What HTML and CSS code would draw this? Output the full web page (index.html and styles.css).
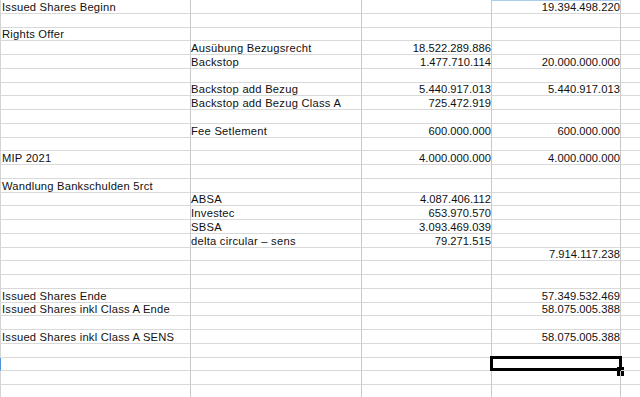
FILE: index.html
```html
<!DOCTYPE html>
<html lang="de">
<head>
<meta charset="utf-8">
<title>Issued Shares</title>
<link rel="stylesheet" href="styles.css">
</head>
<body>
<div class="sheet">
  <div class="row"><div class="c a">Issued Shares Beginn</div><div class="c b"></div><div class="c n"></div><div class="c n hl">19.394.498.220</div><div class="c e"></div></div>
  <div class="row"><div class="c a"></div><div class="c b"></div><div class="c n"></div><div class="c n"></div><div class="c e"></div></div>
  <div class="row"><div class="c a">Rights Offer</div><div class="c b"></div><div class="c n"></div><div class="c n"></div><div class="c e"></div></div>
  <div class="row"><div class="c a"></div><div class="c b">Ausübung Bezugsrecht</div><div class="c n">18.522.289.886</div><div class="c n"></div><div class="c e"></div></div>
  <div class="row"><div class="c a"></div><div class="c b">Backstop</div><div class="c n">1.477.710.114</div><div class="c n">20.000.000.000</div><div class="c e"></div></div>
  <div class="row"><div class="c a"></div><div class="c b"></div><div class="c n"></div><div class="c n"></div><div class="c e"></div></div>
  <div class="row"><div class="c a"></div><div class="c b">Backstop add Bezug</div><div class="c n">5.440.917.013</div><div class="c n">5.440.917.013</div><div class="c e"></div></div>
  <div class="row"><div class="c a"></div><div class="c b">Backstop add Bezug Class A</div><div class="c n">725.472.919</div><div class="c n"></div><div class="c e"></div></div>
  <div class="row"><div class="c a"></div><div class="c b"></div><div class="c n"></div><div class="c n"></div><div class="c e"></div></div>
  <div class="row"><div class="c a"></div><div class="c b">Fee Setlement</div><div class="c n">600.000.000</div><div class="c n">600.000.000</div><div class="c e"></div></div>
  <div class="row"><div class="c a"></div><div class="c b"></div><div class="c n"></div><div class="c n"></div><div class="c e"></div></div>
  <div class="row"><div class="c a">MIP 2021</div><div class="c b"></div><div class="c n">4.000.000.000</div><div class="c n">4.000.000.000</div><div class="c e"></div></div>
  <div class="row"><div class="c a"></div><div class="c b"></div><div class="c n"></div><div class="c n"></div><div class="c e"></div></div>
  <div class="row"><div class="c a">Wandlung Bankschulden 5rct</div><div class="c b"></div><div class="c n"></div><div class="c n"></div><div class="c e"></div></div>
  <div class="row"><div class="c a"></div><div class="c b">ABSA</div><div class="c n">4.087.406.112</div><div class="c n"></div><div class="c e"></div></div>
  <div class="row"><div class="c a"></div><div class="c b">Investec</div><div class="c n">653.970.570</div><div class="c n"></div><div class="c e"></div></div>
  <div class="row"><div class="c a"></div><div class="c b">SBSA</div><div class="c n">3.093.469.039</div><div class="c n"></div><div class="c e"></div></div>
  <div class="row"><div class="c a"></div><div class="c b">delta circular – sens</div><div class="c n">79.271.515</div><div class="c n"></div><div class="c e"></div></div>
  <div class="row"><div class="c a"></div><div class="c b"></div><div class="c n"></div><div class="c n">7.914.117.238</div><div class="c e"></div></div>
  <div class="row"><div class="c a"></div><div class="c b"></div><div class="c n"></div><div class="c n"></div><div class="c e"></div></div>
  <div class="row"><div class="c a"></div><div class="c b"></div><div class="c n"></div><div class="c n"></div><div class="c e"></div></div>
  <div class="row"><div class="c a">Issued Shares Ende</div><div class="c b"></div><div class="c n"></div><div class="c n">57.349.532.469</div><div class="c e"></div></div>
  <div class="row"><div class="c a">Issued Shares inkl Class A Ende</div><div class="c b"></div><div class="c n"></div><div class="c n">58.075.005.388</div><div class="c e"></div></div>
  <div class="row"><div class="c a"></div><div class="c b"></div><div class="c n"></div><div class="c n"></div><div class="c e"></div></div>
  <div class="row"><div class="c a">Issued Shares inkl Class A SENS</div><div class="c b"></div><div class="c n"></div><div class="c n">58.075.005.388</div><div class="c e"></div></div>
  <div class="row"><div class="c a"></div><div class="c b"></div><div class="c n"></div><div class="c n"></div><div class="c e"></div></div>
  <div class="row"><div class="c a rowhl"></div><div class="c b"></div><div class="c n"></div><div class="c n sel"></div><div class="c e"></div></div>
  <div class="row"><div class="c a"></div><div class="c b"></div><div class="c n"></div><div class="c n"></div><div class="c e"></div></div>
  <div class="row"><div class="c a"></div><div class="c b"></div><div class="c n"></div><div class="c n"></div><div class="c e"></div></div>
</div>
</body>
</html>
```

FILE: styles.css
```css
html, body {
  margin: 0;
  padding: 0;
  background: #ffffff;
  overflow: hidden;
}

.sheet {
  width: 640px;
  height: 397px;
  overflow: hidden;
  font-family: "Liberation Sans", Arial, sans-serif;
  font-size: 11.2px;
  color: #111111;
}

.row {
  display: grid;
  grid-template-columns: 191px 171px 130px 129px 1fr;
  height: 13.75px;
}

.c {
  box-sizing: border-box;
  border-right: 1px solid #c9c9c9;
  border-bottom: 1px solid #d9d9d9;
  display: flex;
  align-items: flex-end;
  line-height: 12px;
  white-space: nowrap;
  padding: 0 1px;
  position: relative;
}

.a {
  border-left: 1px solid #d4d4d4;
  padding-left: 1px;
  letter-spacing: 0.22px;
}

.b {
  padding-left: 0;
  letter-spacing: 0.25px;
}

.n {
  justify-content: flex-end;
  padding-right: 0;
  letter-spacing: 0.03px;
}

.e {
  border-right: none;
}

.hl {
  box-shadow: inset 0 1px 0 #a9cdea;
}

.rowhl {
  border-left-color: #4f94d4;
}

.sel::before {
  content: "";
  position: absolute;
  left: -2px;
  right: -2px;
  top: -2px;
  bottom: -1px;
  border: 3px solid #000;
}

.sel::after {
  content: "";
  position: absolute;
  right: -4px;
  bottom: -6px;
  width: 7px;
  height: 9px;
  background: #000;
}
```
